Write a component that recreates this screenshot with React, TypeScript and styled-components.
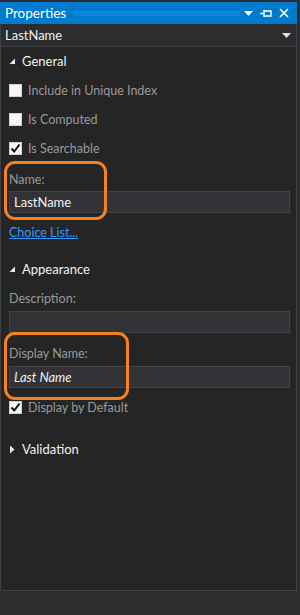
import React from "react";
import styled, { createGlobalStyle } from "styled-components";

const GlobalStyle = createGlobalStyle`
  html, body {
    margin: 0;
    padding: 0;
    background: #2d2d30;
  }
  body {
    font-family: Lato, "Noto Sans", sans-serif;
    font-size: 12.5px;
  }
`;

const Page = styled.div`
  width: 300px;
  height: 615px;
  padding-top: 2px;
  box-sizing: border-box;
  background: #2d2d30;
`;

const Panel = styled.div`
  position: relative;
  display: flex;
  flex-direction: column;
  width: 297px;
  height: 589px;
  box-sizing: border-box;
  border-right: 1px solid #3f3f46;
  border-bottom: 1px solid #3f3f46;
  border-left: 1px solid #3f3f46;
  background: #252526;
`;

const TitleBar = styled.div`
  display: flex;
  align-items: center;
  height: 22px;
  margin: 0 -1px;
  padding: 0 8px 0 5px;
  background: #007acc;
  color: #ffffff;
  font-size: 13.5px;
`;

const Grip = styled.div`
  flex: 1;
  height: 5px;
  margin: 1px 4px 0 7px;
  background-image: conic-gradient(
    rgba(255, 255, 255, 0.16) 25%,
    transparent 0 50%,
    rgba(255, 255, 255, 0.16) 0 75%,
    transparent 0
  );
  background-size: 2px 2px;
`;

const TitleIcons = styled.div`
  display: flex;
  align-items: center;
  gap: 7px;
`;

const ObjectSelector = styled.div`
  display: flex;
  align-items: center;
  justify-content: space-between;
  height: 22px;
  padding: 0 5px 0 4px;
  border-bottom: 1px solid #3f3f46;
  background: #2d2d30;
  color: #f1f1f1;
  font-size: 13px;
`;

const Body = styled.div`
  display: flex;
  flex-direction: column;
  padding: 4px 6px 0 7px;
`;

const SectionHeader = styled.div<{ $mt?: number }>`
  display: flex;
  align-items: center;
  gap: 6px;
  height: 20px;
  margin-top: ${(p) => p.$mt ?? 0}px;
  padding-left: 1px;
  color: #f1f1f1;
  font-size: 13px;
`;

const CheckRow = styled.label<{ $mt?: number }>`
  display: flex;
  align-items: center;
  gap: 6px;
  height: 20px;
  margin-top: ${(p) => p.$mt ?? 9}px;
  padding-left: 1px;
  color: #999999;
`;

const Box = styled.span`
  display: flex;
  align-items: center;
  justify-content: center;
  width: 13px;
  height: 13px;
  box-sizing: border-box;
  border: 1px solid #d0d0d0;
  background: #f6f6f6;
`;

const FieldLabel = styled.div<{ $mt: number }>`
  height: 18px;
  margin-top: ${(p) => p.$mt}px;
  padding-left: 1px;
  line-height: 18px;
  color: #999999;
`;

const TextInput = styled.div<{ $italic?: boolean; $mt: number }>`
  display: flex;
  align-items: center;
  height: 22px;
  box-sizing: border-box;
  margin-top: ${(p) => p.$mt}px;
  margin-left: 1px;
  padding: 0 4px;
  border: 1px solid #434346;
  background: #333337;
  color: #f1f1f1;
  font-size: 13px;
  font-style: ${(p) => (p.$italic ? "italic" : "normal")};
`;

const Link = styled.a`
  align-self: flex-start;
  height: 17px;
  margin-top: 11px;
  padding-left: 1px;
  line-height: 17px;
  color: #3399ff;
  text-decoration: underline;
`;

const Highlight = styled.div<{ $top: number; $left: number; $w: number; $h: number }>`
  position: absolute;
  top: ${(p) => p.$top}px;
  left: ${(p) => p.$left}px;
  width: ${(p) => p.$w}px;
  height: ${(p) => p.$h}px;
  box-sizing: border-box;
  border: 3px solid #f58220;
  border-radius: 11px;
  pointer-events: none;
`;

const Expanded = () => (
  <svg width="7" height="7" viewBox="0 0 7 7">
    <path d="M6 0.5 L6 6 L0.5 6 Z" fill="#e8e8e8" />
  </svg>
);

const Collapsed = () => (
  <svg width="7" height="9" viewBox="0 0 7 9">
    <path d="M1 0.5 L5.5 4.5 L1 8.5 Z" fill="#e8e8e8" />
  </svg>
);

const DownArrow = ({ color }: { color: string }) => (
  <svg width="9" height="5" viewBox="0 0 9 5">
    <path d="M0 0 L9 0 L4.5 5 Z" fill={color} />
  </svg>
);

const PinIcon = () => (
  <svg width="12" height="9" viewBox="0 0 12 9">
    <path d="M0 4.5 H4" stroke="#fff" strokeWidth="1.4" />
    <path d="M4 1 V8" stroke="#fff" strokeWidth="1.4" />
    <path d="M4 2 H11 V7 H4" fill="none" stroke="#fff" strokeWidth="1.4" />
  </svg>
);

const CloseIcon = () => (
  <svg width="10" height="10" viewBox="0 0 10 10">
    <path d="M1 1 L9 9 M9 1 L1 9" stroke="#fff" strokeWidth="1.6" />
  </svg>
);

const Check = () => (
  <svg width="11" height="11" viewBox="0 0 11 11">
    <path d="M1.5 5.5 L4.2 8.5 L9.5 1.5" fill="none" stroke="#111" strokeWidth="2" />
  </svg>
);

const CheckBox: React.FC<{ checked?: boolean; label: string; mt?: number }> = ({
  checked,
  label,
  mt,
}) => (
  <CheckRow $mt={mt}>
    <Box>{checked && <Check />}</Box>
    {label}
  </CheckRow>
);

const App: React.FC = function () {
  return (
    <Page>
      <GlobalStyle />
      <Panel>
        <TitleBar>
          <span>Properties</span>
          <Grip />
          <TitleIcons>
            <DownArrow color="#ffffff" />
            <PinIcon />
            <CloseIcon />
          </TitleIcons>
        </TitleBar>
        <ObjectSelector>
          <span>LastName</span>
          <DownArrow color="#e0e0e0" />
        </ObjectSelector>
        <Body>
          <SectionHeader>
            <Expanded />
            General
          </SectionHeader>
          <CheckBox label="Include in Unique Index" />
          <CheckBox label="Is Computed" />
          <CheckBox checked label="Is Searchable" />
          <FieldLabel $mt={13}>Name:</FieldLabel>
          <TextInput $mt={2}>LastName</TextInput>
          <Link>Choice List...</Link>

          <SectionHeader $mt={18}>
            <Expanded />
            Appearance
          </SectionHeader>
          <FieldLabel $mt={11}>Description:</FieldLabel>
          <TextInput $mt={3} />
          <FieldLabel $mt={12}>Display Name:</FieldLabel>
          <TextInput $mt={3} $italic>
            Last Name
          </TextInput>
          <CheckBox checked label="Display by Default" mt={9} />

          <SectionHeader $mt={22}>
            <Collapsed />
            Validation
          </SectionHeader>
        </Body>
        <Highlight $top={159} $left={3} $w={103} $h={59} />
        <Highlight $top={330} $left={3} $w={125} $h={68} />
      </Panel>
    </Page>
  );
};

export default App;
